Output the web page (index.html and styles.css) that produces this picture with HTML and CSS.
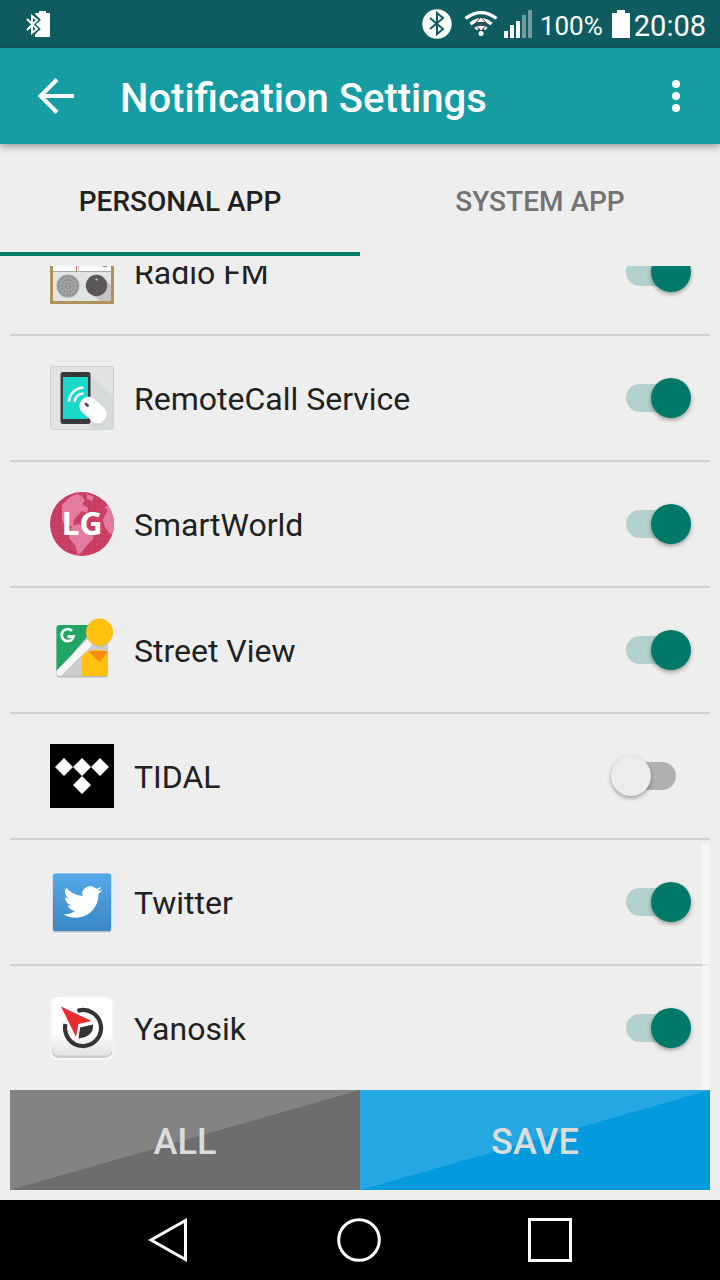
FILE: index.html
```
<!DOCTYPE html>
<html lang="en">
<head>
<meta charset="utf-8">
<meta name="viewport" content="width=device-width, initial-scale=1">
<title>Notification Settings</title>
<link rel="stylesheet" href="styles.css">
</head>
<body class="screen">
<div class="status">
  <svg class="status-device" width="24" height="26" viewBox="0 0 24 26" aria-hidden="true">
    <path fill="#fff" d="M9 2h4V0h7v2h4v24H9v-3l5-5-5-5 5-5-5-5z"/>
    <path fill="none" stroke="#0e5c5f" stroke-width="5" d="M6 5l5 4-5 4 5 5-5 4"/>
    <path fill="none" stroke="#fff" stroke-width="2" d="M1 8l10 10-5 4V5l5 4L1 19"/>
  </svg>
  <svg width="30" height="30" viewBox="0 0 30 30" aria-hidden="true">
    <circle cx="15" cy="15" r="14.7" fill="#fff"/>
    <path fill="none" stroke="#0e5c5f" stroke-width="2" d="M8 9l13 11-6 5V4l6 5L8 20"/>
  </svg>
  <svg class="status-wifi" width="34" height="26" viewBox="0 0 34 26" aria-hidden="true">
    <g fill="none" stroke="#fff" stroke-width="3.2">
      <path d="M1.500 7.500Q17-4.500 32.500 7.500"/><path d="M6.500 13Q17 4.500 27.500 13"/><path d="M11.500 18Q17 13 22.500 18"/>
    </g>
    <circle cx="17" cy="22.500" r="2.500" fill="#fff"/>
    <path fill="#fff" stroke="#4b4545" stroke-width="1" d="M17 6l5 5.500H12zM17 20l5-5.500H12z"/>
  </svg>
  <svg class="status-signal" width="28" height="28" viewBox="0 0 28 28" aria-hidden="true">
    <path fill="#fff" d="M0 21h4v7H0zM6 15h4v13H6zM12 11h4v17h-4z"/>
    <path fill="#6e9d9f" d="M18 5h4v23h-4zM24 0h4v28h-4z"/>
  </svg>
  <span class="status-level">100%</span>
  <svg class="status-battery" width="18" height="28" viewBox="0 0 18 28" aria-hidden="true">
    <path fill="#fff" d="M0 3h5V0h8v3h5v25H0z"/>
  </svg>
  <span class="status-time">20:08</span>
</div>

<header class="toolbar">
  <button class="icon-button" type="button" aria-label="Back">
    <svg width="38" height="38" viewBox="0 0 38 38"><path fill="none" stroke="#fff" stroke-width="4" d="M37 19H4M20 2.500L3.500 19 20 35.500"/></svg>
  </button>
  <h1 class="title">Notification Settings</h1>
  <button class="icon-button" type="button" aria-label="More options">
    <svg width="8" height="32" viewBox="0 0 8 32"><g fill="#fff"><circle cx="4" cy="4" r="4"/><circle cx="4" cy="16" r="4"/><circle cx="4" cy="28" r="4"/></g></svg>
  </button>
</header>

<nav class="tabs" role="tablist">
  <button class="tab tab-active" type="button" role="tab" aria-selected="true">PERSONAL APP</button>
  <button class="tab" type="button" role="tab" aria-selected="false">SYSTEM APP</button>
</nav>

<main class="list">
  <label class="row">
    <svg class="app-icon" viewBox="0 0 64 64" aria-hidden="true">
      <rect y="8" width="64" height="56" rx="1" fill="#b0935a"/><rect x="3" y="11" width="58" height="50" fill="#e2e4e4"/>
      <path fill="#fff" d="M3 11h58v20H3z"/><path stroke="#aaa" d="M3 31.500h58"/><path stroke="#c3c3c3" d="M28.500 11v21"/>
      <path stroke="#e04a80" d="M26.500 11v18"/><path stroke="#a58a45" d="M26.500 29v3"/><path stroke="#888" d="M53 26.500h4"/>
      <path fill="#c3c3c3" d="M56 40l5 5v16H50L38 51z"/>
      <circle cx="18" cy="46" r="11.500" fill="#a3a3a3"/><circle cx="18" cy="46" r="9.500" fill="none" stroke="#848484" stroke-width="1.500" stroke-dasharray="1.500 1.500"/><circle cx="18" cy="46" r="6" fill="none" stroke="#848484" stroke-width="1.500" stroke-dasharray="1.500 1.500"/><circle cx="18" cy="46" r="2.500" fill="none" stroke="#848484" stroke-width="1.500" stroke-dasharray="1.500 1.500"/>
      <circle cx="46.500" cy="45.500" r="10.700" fill="#5b5757"/><circle cx="46.500" cy="39.500" r="1" fill="#ddd"/>
    </svg>
    <span class="app-name">Radio FM</span>
    <input class="switch" type="checkbox" role="switch" checked>
  </label>
  <label class="row">
    <svg class="app-icon" viewBox="0 0 64 64" aria-hidden="true">
      <rect x=".5" y=".5" width="63" height="63" rx="2" fill="#e1e3e3" stroke="#cfd2d2"/>
      <path fill="#d3d5d5" d="M40 8l23 22v33H42z" opacity=".7"/>
      <rect x="10.500" y="6" width="30" height="52" rx="2.500" fill="#3b3a3a"/><path fill="#18d8cc" d="M13 11h25v42H13z"/><path stroke="#222" d="M22 8.500h7"/>
      <g fill="none" stroke="#fff" stroke-width="2.600"><path d="M19 36q1-13 14.500-14.500"/><path d="M24.500 36q1-8 9-8.500"/></g>
      <rect x="-9" y="-15" width="18" height="30" rx="8.500" fill="#fff" transform="translate(43 44) rotate(-48)"/>
      <path stroke="#555" stroke-width="3" stroke-linecap="round" d="M36 38l1.500 1.500"/>
    </svg>
    <span class="app-name">RemoteCall Service</span>
    <input class="switch" type="checkbox" role="switch" checked>
  </label>
  <label class="row">
    <svg class="app-icon" viewBox="0 0 64 64" aria-hidden="true">
      <defs><clipPath id="globe"><circle cx="32" cy="32" r="32"/></clipPath>
      <pattern id="dots" width="5" height="5" patternUnits="userSpaceOnUse"><circle cx="2" cy="2" r=".6" fill="#dc6486"/></pattern></defs>
      <g clip-path="url(#globe)">
        <path fill="#c73e62" d="M0 0h64v64H0z"/><path fill="url(#dots)" d="M0 0h64v64H0z"/>
        <path fill="#e27b9d" d="M12 13L20 5l7-3 5 2 3 5-3 3 6 4-1 5-5-2-5 5-3 4-1 6h-4l1 4 5 3h-3l-6-6-4-7zM37 2l7 3-2 4-5-2zM54 15l6-2 4 5v25l-5-2-4-6-2-7 2-5 3-5zM22 34l7-2 8 4 7 5-1 6-6 6-5 7-4 3-3-10-6-7 1-7z"/>
      </g>
      <text x="32" y="43" text-anchor="middle" class="mark-lg">LG</text>
    </svg>
    <span class="app-name">SmartWorld</span>
    <input class="switch" type="checkbox" role="switch" checked>
  </label>
  <label class="row">
    <svg class="app-icon" viewBox="0 0 64 64" aria-hidden="true">
      <defs><clipPath id="card"><rect x="6.500" y="7" width="51.500" height="51" rx="3"/></clipPath></defs>
      <rect x="6.500" y="8" width="51.500" height="51.500" rx="3" fill="#b8b8b8"/>
      <g clip-path="url(#card)">
        <path fill="#cbcbcb" d="M6 6h52v52H6z"/><path fill="#21a464" d="M6 6h42L6 55z"/>
        <path stroke="#f6f6f6" stroke-width="7" d="M5 59L58 6"/><path fill="#fec20f" d="M32 38q10-10 26-4v25H32z"/>
        <path fill="#fb8c10" d="M39 33h18v2L49.500 44 39 34z"/>
      </g>
      <circle cx="49.500" cy="15" r="13.500" fill="#b4a77d" opacity=".5"/><circle cx="49.500" cy="14" r="13.500" fill="#fec20f"/>
      <path fill="none" stroke="#f1faf5" stroke-width="2.800" d="M22 13a6 6 0 1 0 1.500 5.500h-6"/>
    </svg>
    <span class="app-name">Street View</span>
    <input class="switch" type="checkbox" role="switch" checked>
  </label>
  <label class="row">
    <svg class="app-icon" viewBox="0 0 64 64" aria-hidden="true">
      <path d="M0 0h64v64H0z"/><path fill="#fff" d="M14 14l9 9-9 9-9-9zM32 14l9 9-9 9-9-9zM50 14l9 9-9 9-9-9zM32 32l9 9-9 9-9-9z"/>
    </svg>
    <span class="app-name">TIDAL</span>
    <input class="switch" type="checkbox" role="switch">
  </label>
  <label class="row">
    <svg class="app-icon" viewBox="0 0 64 64" aria-hidden="true">
      <defs><linearGradient id="sky" x2="0" y2="1"><stop stop-color="#55a9ea"/><stop offset="1" stop-color="#3a87c5"/></linearGradient></defs>
      <rect x="2.500" y="3.500" width="59" height="59" rx="3" fill="#b9c3cb"/><rect x="3" y="3.500" width="58" height="57.500" rx="2.500" fill="url(#sky)"/>
      <path fill="#fff" transform="translate(13.500 12.500) scale(1.620)" d="M23.950 4.570a10 10 0 0 1-2.820.770 4.960 4.960 0 0 0 2.160-2.720c-.950.560-2 .960-3.120 1.180a4.920 4.920 0 0 0-8.380 4.480C7.690 8.090 4.070 6.130 1.640 3.160a4.820 4.820 0 0 0-.670 2.480c0 1.710.870 3.210 2.190 4.100a4.900 4.900 0 0 1-2.230-.620v.060a4.920 4.920 0 0 0 3.950 4.830 5 5 0 0 1-2.210.080 4.940 4.940 0 0 0 4.600 3.420A9.870 9.870 0 0 1 0 19.540a13.990 13.990 0 0 0 7.550 2.210c9.050 0 14-7.500 14-13.980 0-.210 0-.420-.020-.630a9.940 9.940 0 0 0 2.420-2.570z"/>
    </svg>
    <span class="app-name">Twitter</span>
    <input class="switch" type="checkbox" role="switch" checked>
  </label>
  <label class="row">
    <svg class="app-icon" viewBox="0 0 64 64" aria-hidden="true">
      <defs><linearGradient id="tile" x2="0" y2="1"><stop offset=".6" stop-color="#fff"/><stop offset="1" stop-color="#e2e2e2"/></linearGradient></defs>
      <rect y="1" width="64" height="63" rx="8" fill="#f8f8f8"/><rect x="1.500" y="4" width="61" height="58" rx="7" fill="#cfcfcf"/><rect x="1.500" y="1.500" width="61" height="58" rx="7" fill="url(#tile)"/>
      <path fill="none" stroke="#343434" stroke-width="4.200" d="M27.500 14.900A18 18 0 1 1 15.500 28"/>
      <path fill="#343434" d="M30 31.500l13-3q1 12-14.500 14z"/>
      <path fill="#ec2b2f" stroke="#fff" stroke-width="4" paint-order="stroke" d="M11 10.500l30.500 14.500-13 3-2.500 13z"/>
    </svg>
    <span class="app-name">Yanosik</span>
    <input class="switch" type="checkbox" role="switch" checked>
  </label>
  <div class="scroll-thumb"></div>
</main>

<div class="actions">
  <button class="action action-all" type="button">ALL</button>
  <button class="action action-save" type="button">SAVE</button>
</div>

<nav class="system-nav">
  <button class="nav-button" type="button" aria-label="Back"><svg width="44" height="44" viewBox="0 0 44 44"><path d="M39.500 2.500v39L5 22z"/></svg></button>
  <button class="nav-button" type="button" aria-label="Home"><svg width="44" height="44" viewBox="0 0 44 44"><circle cx="22" cy="22" r="20.300"/></svg></button>
  <button class="nav-button" type="button" aria-label="Recent apps"><svg width="44" height="44" viewBox="0 0 44 44"><path d="M1.500 1.500h41v41h-41z"/></svg></button>
</nav>
</body>
</html>
```
FILE: styles.css
```
*, *::before, *::after { box-sizing: border-box; }

.screen {
  margin: 0;
  height: 100vh;
  display: flex;
  flex-direction: column;
  background: #eee;
  color: #212121;
  font-family: Roboto, "Noto Sans", sans-serif;
}

button {
  margin: 0;
  padding: 0;
  border: 0;
  background: none;
  color: inherit;
  font: inherit;
}

svg { display: block; flex: none; }

/* Status bar */
.status {
  flex: none;
  height: 48px;
  padding: 0 14px 0 26px;
  display: flex;
  align-items: center;
  background: #0e5c5f;
  color: #fff;
}
.status-device { margin-right: auto; }
.status-wifi { margin-left: 12px; }
.status-signal { margin-left: 6px; }
.status-level { margin: 4px 0 0 8px; font-size: 26px; line-height: 32px; }
.status-battery { margin-left: 9px; }
.status-time { margin: 4px 0 0 4px; font-size: 29px; line-height: 32px; }

/* Toolbar */
.toolbar {
  position: relative;
  flex: none;
  height: 96px;
  padding: 0 20px 0 32px;
  display: flex;
  align-items: center;
  background: #159da3;
  color: #fff;
  box-shadow: 0 2px 8px rgba(0, 0, 0, .4);
}
.icon-button { width: 48px; height: 48px; display: grid; place-items: center; }
.title {
  flex: 1;
  margin: 6px 0 0 40px;
  font-size: 40px;
  line-height: 48px;
  font-weight: 500;
}

/* Tabs */
.tabs { flex: none; height: 112px; display: grid; grid-template-columns: 1fr 1fr; }
.tab {
  padding-top: 6px;
  border-bottom: 4px solid transparent;
  color: #737373;
  font-size: 28px;
  font-weight: 500;
}
.tab-active { border-color: #00796b; color: #212121; }

/* App list, scrolled to its end */
.list {
  position: relative;
  flex: 1;
  min-height: 0;
  margin: 10px 10px 0;
  display: flex;
  flex-direction: column;
  justify-content: flex-end;
  overflow: hidden;
}
.row {
  flex: none;
  height: 126px;
  padding: 0 19px 0 40px;
  display: flex;
  align-items: center;
  gap: 20px;
  border-bottom: 2px solid #d0d0d0;
}
.row:nth-last-child(2) { height: 124px; border-bottom: 0; }
.app-icon { width: 64px; height: 64px; }
.app-name { flex: 1; padding-top: 2px; font-size: 32px; line-height: 40px; }
.mark-lg { font: 700 32px "Open Sans", sans-serif; fill: #fff; }

.switch {
  appearance: none;
  flex: none;
  width: 80px;
  height: 40px;
  margin: 0;
  display: grid;
  align-items: center;
}
.switch::before, .switch::after { content: ""; grid-area: 1 / 1; }
.switch::before { height: 28px; margin: 0 15px; border-radius: 14px; background: #b0b0b0; }
.switch::after {
  width: 40px;
  height: 40px;
  border-radius: 50%;
  background: #ececec;
  box-shadow: 0 2px 4px rgba(0, 0, 0, .35);
}
.switch:checked::before { background: #b2d0cd; }
.switch:checked::after { justify-self: end; background: #00796b; }

.scroll-thumb {
  position: absolute;
  right: 0;
  bottom: 0;
  width: 8px;
  height: 245px;
  background: rgba(255, 255, 255, .5);
}

/* Bottom actions */
.actions { flex: none; margin: 0 10px 10px; display: grid; grid-template-columns: 1fr 1fr; }
.action { height: 100px; padding-top: 4px; color: #dcdcdc; font-size: 36px; font-weight: 500; }
.action-all { background: linear-gradient(to bottom right, #838383 50%, #6d6d6d 50%); }
.action-save { background: linear-gradient(to bottom right, #25a7e2 50%, #039ade 50%); }

/* System navigation */
.system-nav {
  flex: none;
  height: 80px;
  padding: 0 148px 0 146px;
  display: flex;
  align-items: center;
  justify-content: space-between;
  background: #000;
}
.nav-button svg { fill: none; stroke: #fff; stroke-width: 3; }
```
